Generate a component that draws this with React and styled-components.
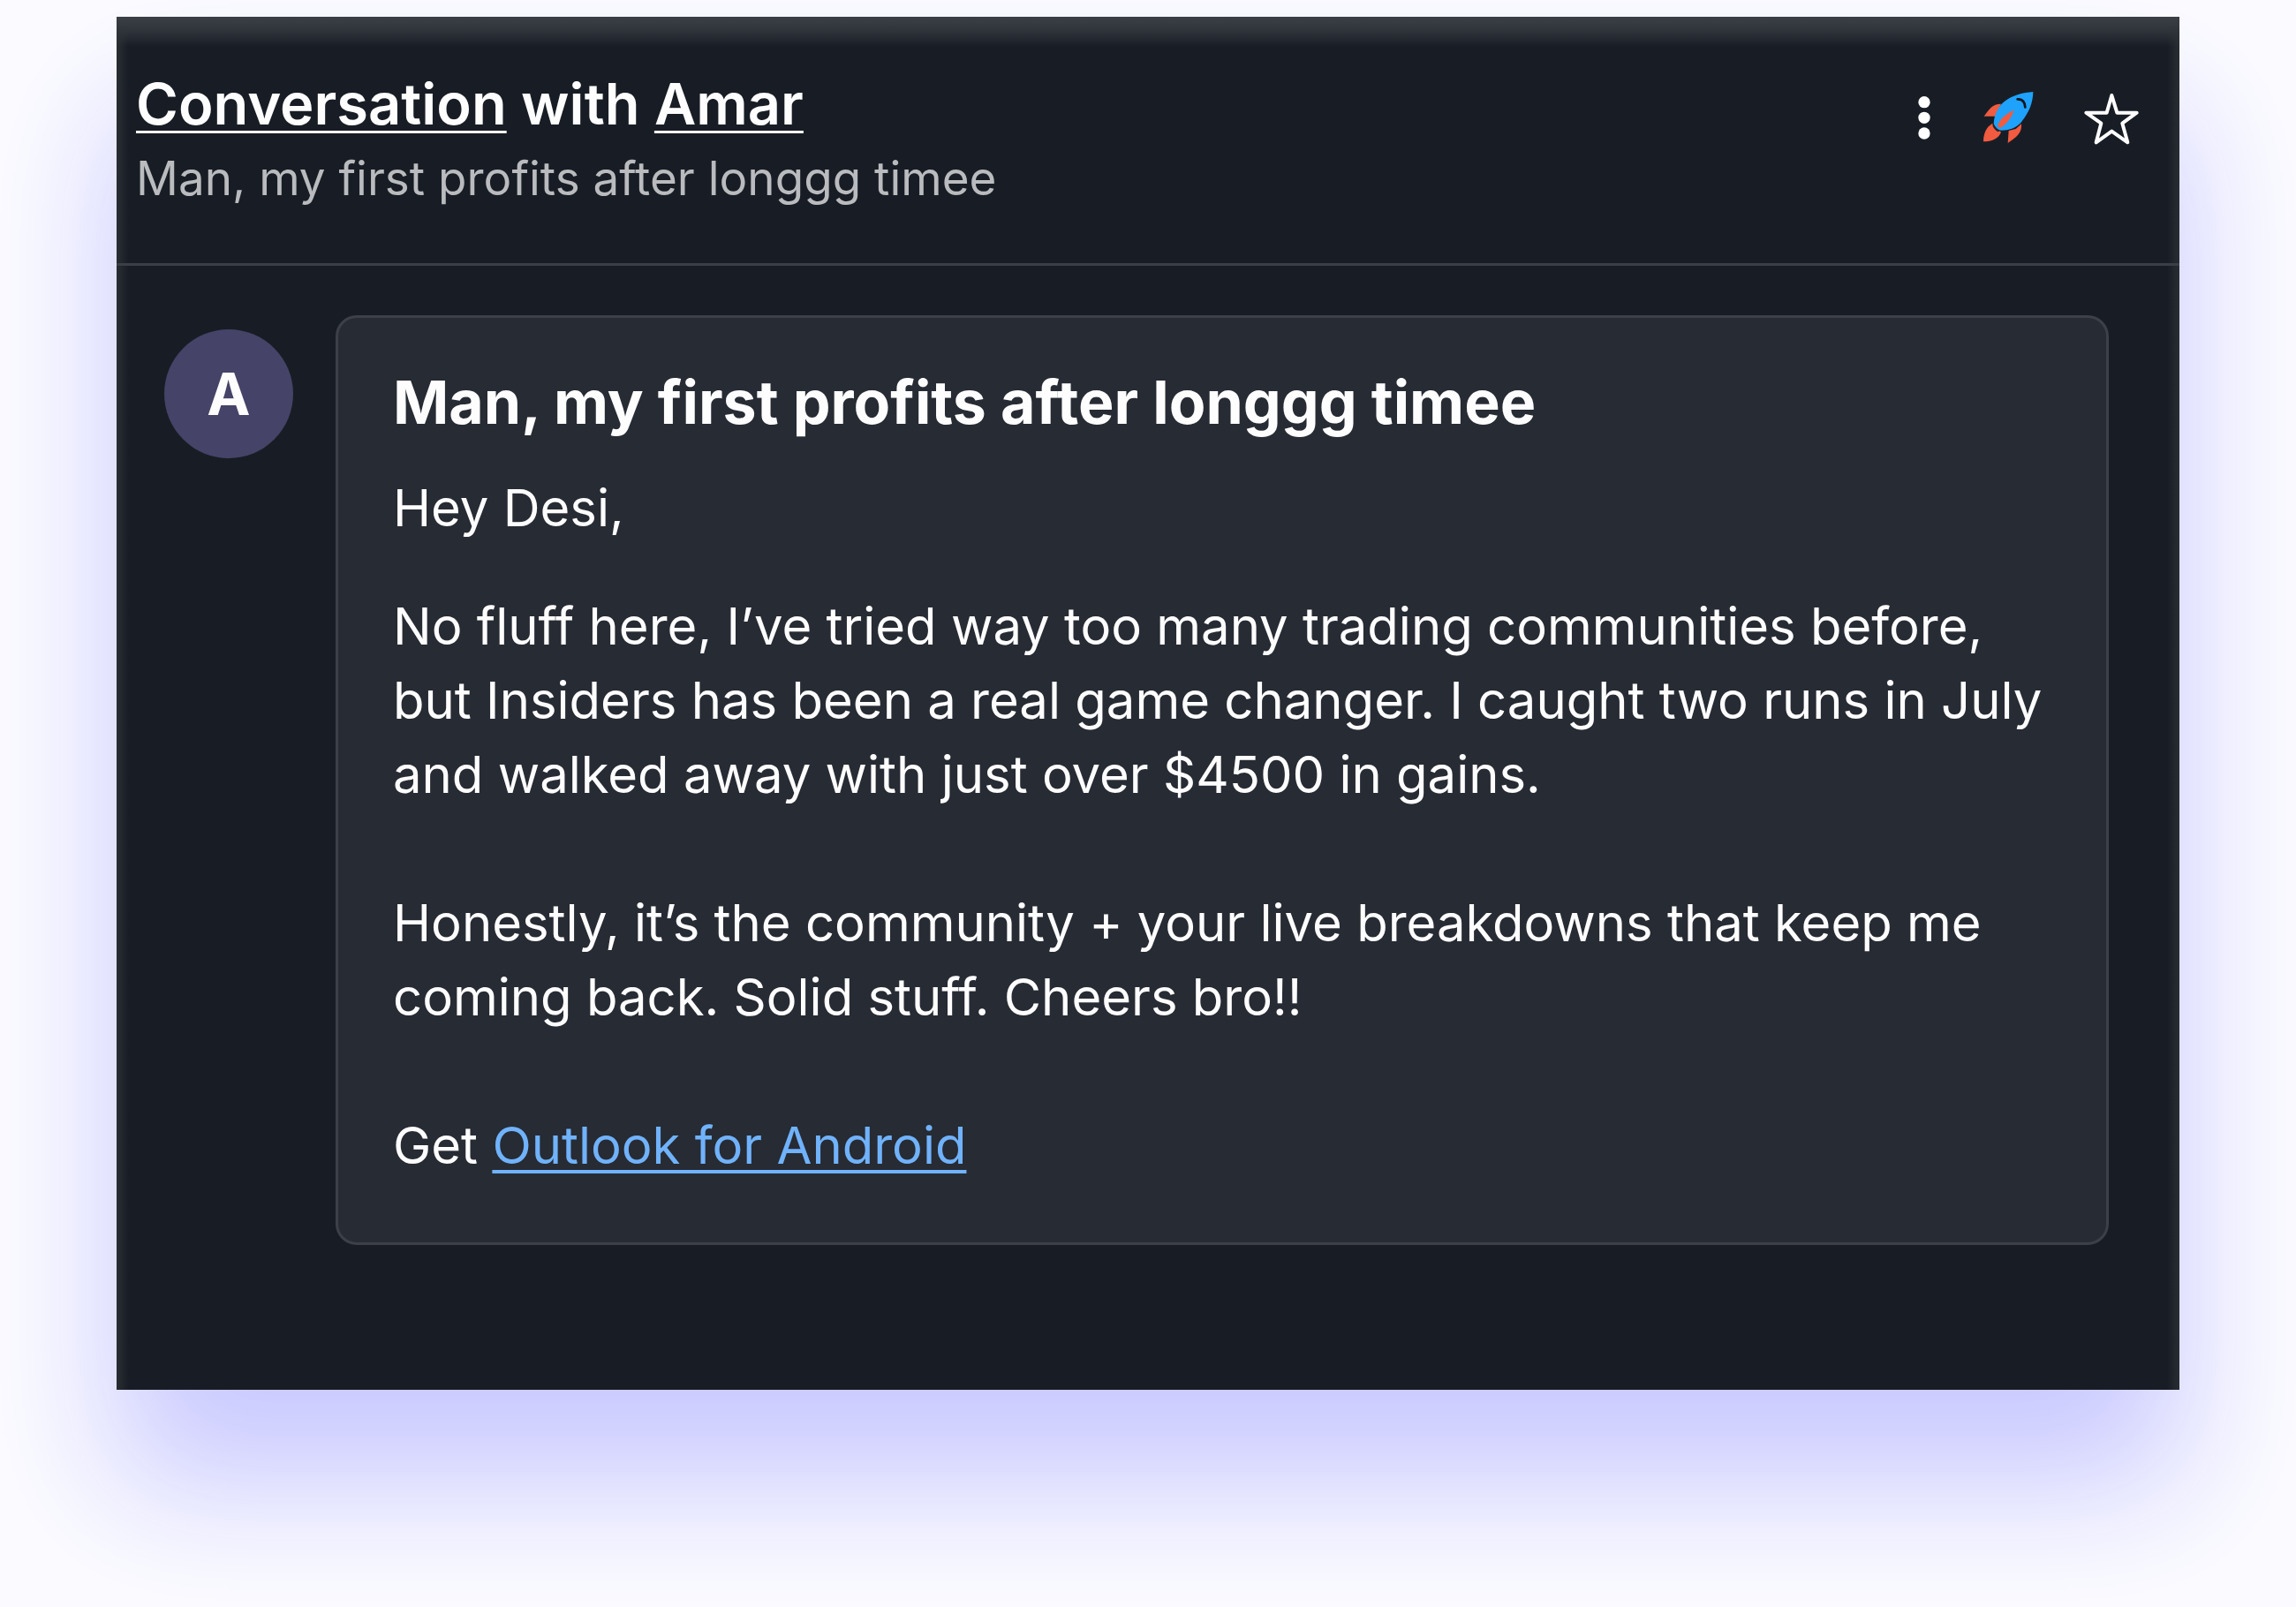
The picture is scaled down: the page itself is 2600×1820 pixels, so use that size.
import React from "react";
import styled, { createGlobalStyle } from "styled-components";

const GlobalStyle = createGlobalStyle`
  * {
    box-sizing: border-box;
  }

  body {
    margin: 0;
    background: #fbfbff;
    color: #fdfdfe;
    font-family: Inter, "Liberation Sans", sans-serif;
    -webkit-font-smoothing: antialiased;
  }
`;

const Page = styled.div`
  min-height: 100vh;
  padding: 19px 132px 245px;
  overflow: hidden;
`;

const Panel = styled.main`
  padding-bottom: 164px;
  background:
    linear-gradient(to bottom, #3b3f46 0, #2f333a 16px, rgba(24, 29, 37, 0) 34px),
    linear-gradient(to right, #292d33 0, rgba(24, 29, 37, 0) 14px),
    linear-gradient(to left, #292d33 0, rgba(24, 29, 37, 0) 14px),
    #181d25;
  box-shadow: 0 106px 144px #c8c8ff;
`;

const Header = styled.header`
  display: flex;
  justify-content: space-between;
  align-items: flex-start;
  padding: 59px 45px 64px 22px;
  border-bottom: 3px solid #3b3e46;
`;

const Titles = styled.div`
  display: flex;
  flex-direction: column;
  gap: 12px;
`;

const Title = styled.h1`
  margin: 0;
  font-size: 65px;
  line-height: 80px;
  font-weight: 600;
`;

const TitleLink = styled.a`
  color: inherit;
  text-decoration: underline;
  text-decoration-thickness: 3px;
  text-underline-offset: 7px;
  text-decoration-skip-ink: none;
`;

const Subtitle = styled.p`
  margin: 0;
  font-size: 53px;
  line-height: 64px;
  color: #b9bbbe;
`;

const Actions = styled.div`
  display: flex;
  gap: 54px;
  padding-top: 24px;
`;

const IconButton = styled.button`
  display: block;
  width: ${({ $width }) => $width}px;
  height: 64px;
  padding: 0;
  border: 0;
  background: none;
  color: #ffffff;
  cursor: pointer;

  svg {
    display: block;
    width: 100%;
    height: 100%;
  }
`;

const Message = styled.section`
  display: grid;
  grid-template-columns: 146px minmax(0, 1fr);
  align-items: start;
  gap: 48px;
  padding: 56px 80px 0 54px;
`;

const Avatar = styled.div`
  display: flex;
  align-items: center;
  justify-content: center;
  height: 146px;
  margin-top: 16px;
  border-radius: 50%;
  background: #454367;
  font-size: 66px;
  font-weight: 700;
`;

const Card = styled.article`
  padding: 53px 60px 68px 62px;
  border: 3px solid #3d4048;
  border-radius: 24px;
  background: #272b33;
`;

const Subject = styled.h2`
  margin: 0 0 36px;
  font-size: 68px;
  line-height: 84px;
  font-weight: 700;
`;

const Paragraph = styled.p`
  margin: 0 0 ${({ $gap }) => $gap}px;
  font-size: 58px;
  line-height: 84px;
`;

const MailLink = styled.a`
  color: #70b2fb;
  text-decoration: underline;
  text-decoration-thickness: 4px;
  text-underline-offset: 7px;
  text-decoration-skip-ink: none;
`;

function DotsIcon() {
  return (
    <svg viewBox="141 94 72 192" fill="currentColor" aria-hidden="true">
      <circle cx="177" cy="135" r="20" />
      <circle cx="177" cy="188" r="20" />
      <circle cx="177" cy="241" r="20" />
    </svg>
  );
}

function RocketIcon() {
  return (
    <svg viewBox="375 94 180 192" aria-hidden="true">
      <path d="M438 141 C416 140 402 150 380 183 L419 183 Z" fill="#f15b40" />
      <path d="M507 209 C509 236 496 252 461 274 L464 232 L488 226 Z" fill="#f15b40" />
      <path d="M408 208 C388 220 378 242 378 269 C406 269 430 259 438 237 Z" fill="#f15b40" />
      <path
        d="M547 100 C490 104 451 123 430 154 C418 173 414 190 413 207 C417 222 426 230 439 231 C467 231 492 222 508 201 C535 167 546 137 547 100 Z"
        fill="#1fa2fb"
      />
      <path d="M412 207 C417 219 428 229 436 231 L428 236 C419 231 411 222 409 213 Z" fill="#20242c" />
      <path d="M482 162 C457 173 433 192 427 214 C428 219 431 222 435 222 C454 213 472 190 482 162 Z" fill="#f15b40" />
      <path d="M494 125 Q518 124 520 152" fill="none" stroke="#10151d" strokeWidth="8" strokeLinecap="round" />
    </svg>
  );
}

function StarIcon() {
  return (
    <svg viewBox="717 96 192 192" aria-hidden="true">
      <path
        d="M814 114 L832 173 L899 173 L850 209 L868 274 L814 236 L761 274 L778 209 L727 173 L797 173 Z"
        fill="none"
        stroke="currentColor"
        strokeWidth="12"
        strokeLinejoin="round"
      />
    </svg>
  );
}

export default function App() {
  return (
    <>
      <GlobalStyle />
      <Page>
        <Panel>
          <Header>
            <Titles>
              <Title>
                <TitleLink href="#conversation">Conversation</TitleLink> with{" "}
                <TitleLink href="#amar">Amar</TitleLink>
              </Title>
              <Subtitle>Man, my first profits after longgg timee</Subtitle>
            </Titles>
            <Actions>
              <IconButton type="button" $width={24} aria-label="More options">
                <DotsIcon />
              </IconButton>
              <IconButton type="button" $width={60} aria-label="Boost">
                <RocketIcon />
              </IconButton>
              <IconButton type="button" $width={64} aria-label="Star">
                <StarIcon />
              </IconButton>
            </Actions>
          </Header>
          <Message>
            <Avatar>A</Avatar>
            <Card>
              <Subject>Man, my first profits after longgg timee</Subject>
              <Paragraph $gap={50}>Hey Desi,</Paragraph>
              <Paragraph $gap={84}>
                No fluff here, I’ve tried way too many trading communities before,
                <br />
                but Insiders has been a real game changer. I caught two runs in July
                <br />
                and walked away with just over $4500 in gains.
              </Paragraph>
              <Paragraph $gap={84}>
                Honestly, it’s the community + your live breakdowns that keep me
                <br />
                coming back. Solid stuff. Cheers bro!!
              </Paragraph>
              <Paragraph $gap={0}>
                Get <MailLink href="#outlook">Outlook for Android</MailLink>
              </Paragraph>
            </Card>
          </Message>
        </Panel>
      </Page>
    </>
  );
}
